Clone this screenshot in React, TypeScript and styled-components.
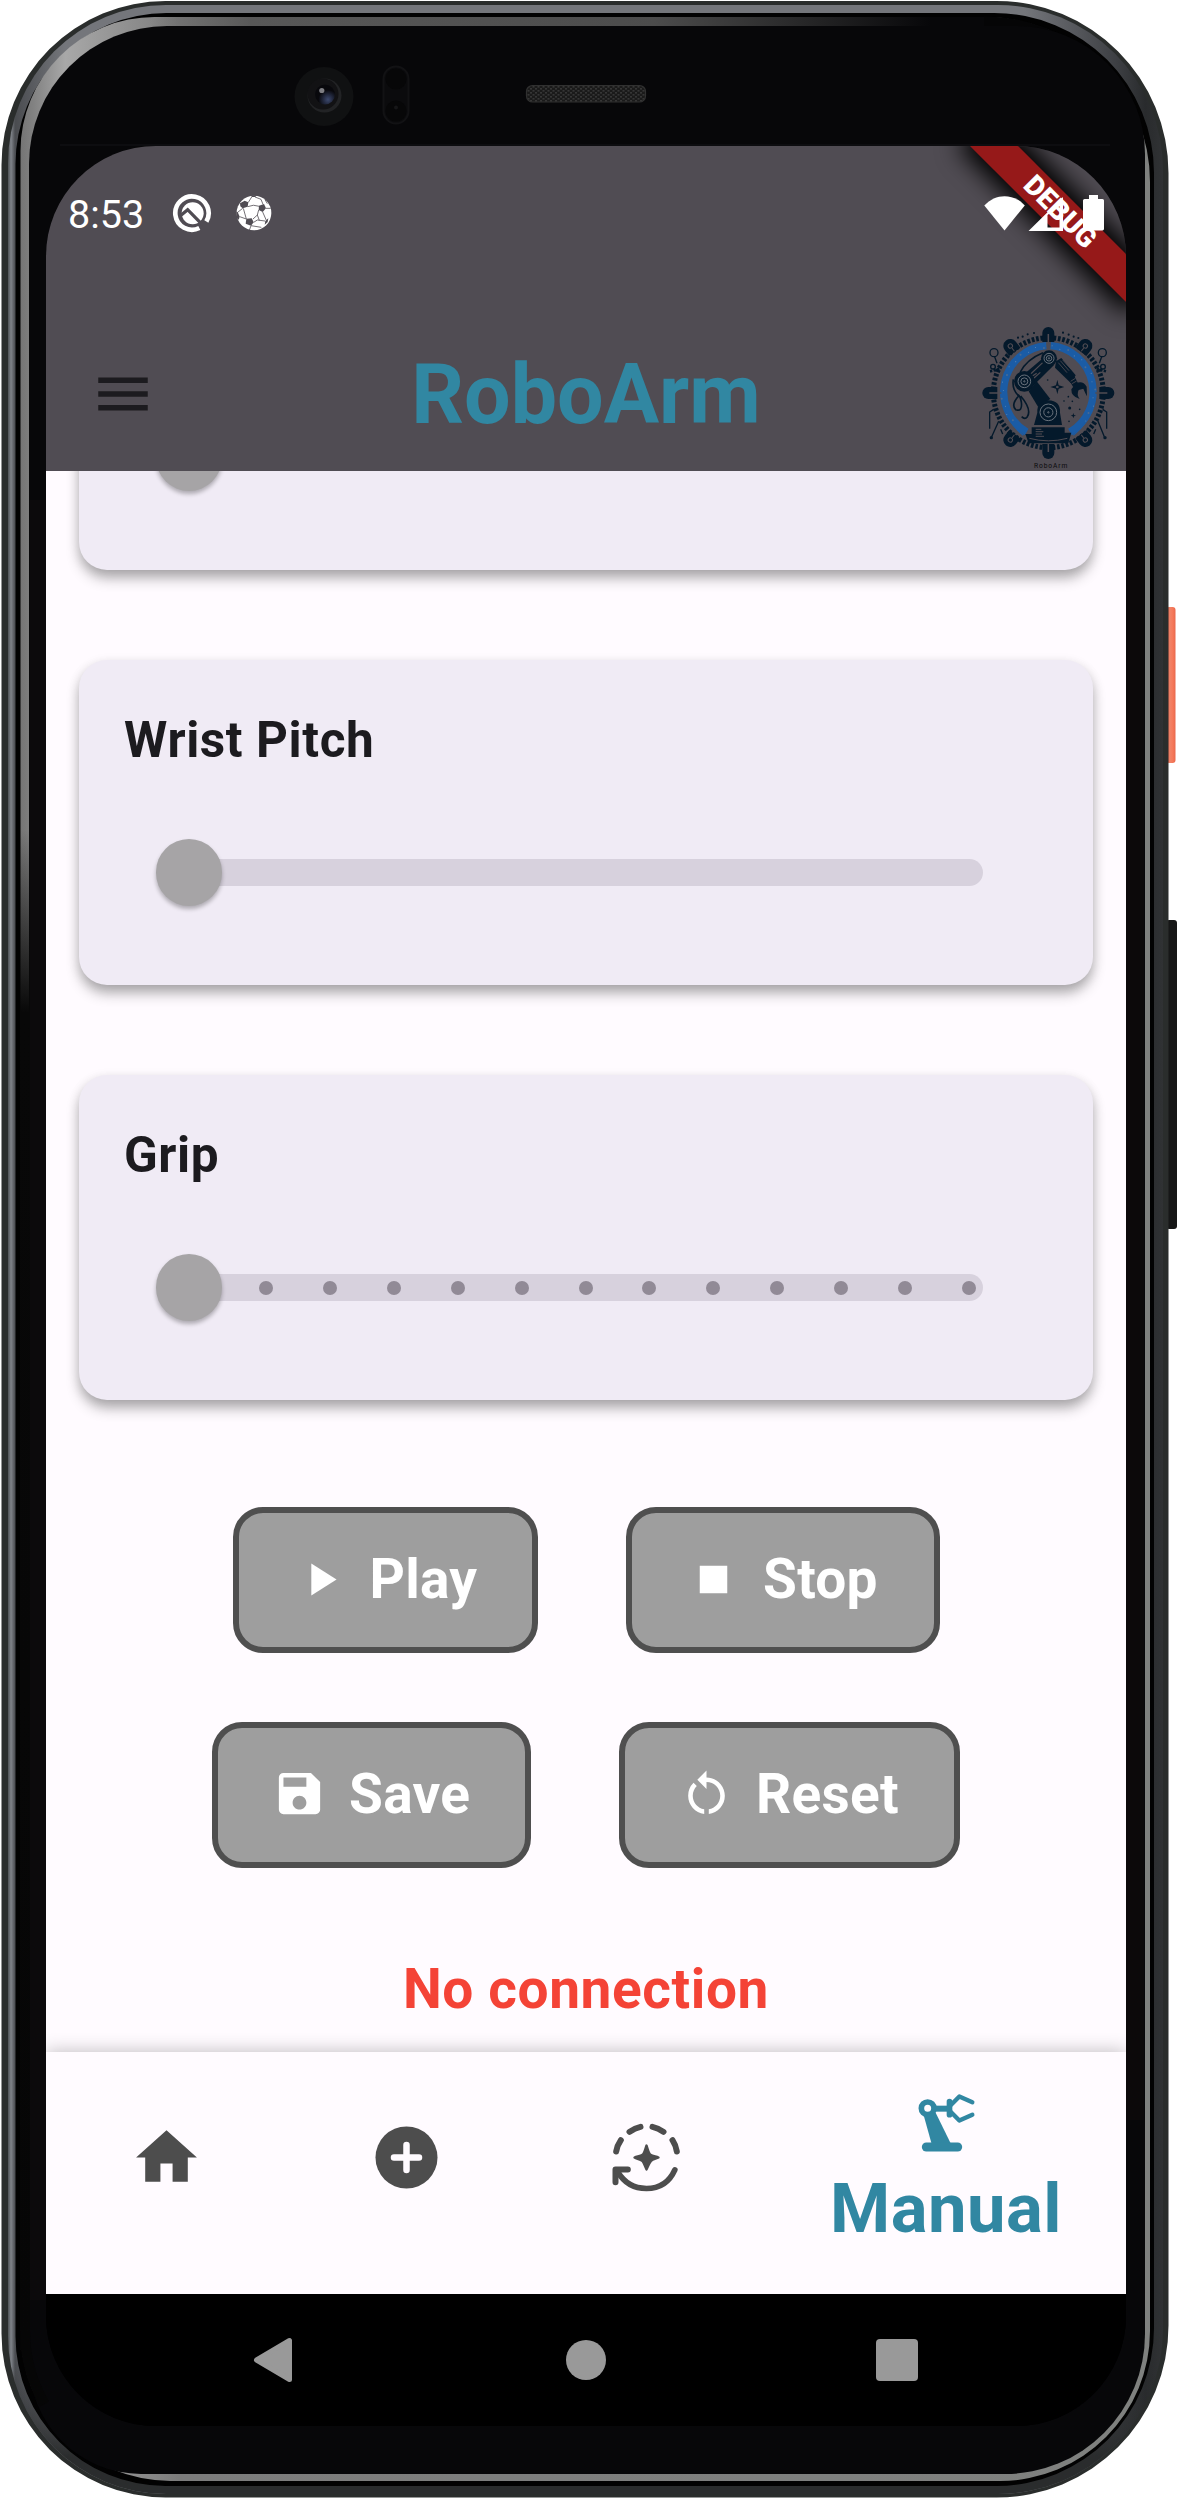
import React from "react";
import styled, { createGlobalStyle } from "styled-components";
import {
  MdPlayArrow,
  MdStop,
  MdSave,
  MdRestartAlt,
  MdMenu,
  MdHome,
} from "react-icons/md";

const INK = "#1c1b1f";
const TEAL = "#3187a2";
const BAR = "#504c53";
const SURFACE = "#fffbff";
const NAV_GREY = "#4d4d4d";

const GlobalStyle = createGlobalStyle`
  * { box-sizing: border-box; }
  body { margin: 0; background: #fff; }
`;

const Device = styled.div`
  position: relative;
  width: 1178px;
  height: 2498px;
  padding: 146px 52px 72px 46px;
  overflow: hidden;
  font-family: Roboto, "Liberation Sans", sans-serif;
`;

const FrameArt = styled.svg`
  position: absolute;
  inset: 0;
  display: block;
`;

const Screen = styled.div`
  position: relative;
  display: flex;
  flex-direction: column;
  width: 1080px;
  height: 2280px;
  border-radius: 110px;
  overflow: hidden;
  background: #000;
`;

const AppBar = styled.header`
  position: relative;
  z-index: 2;
  flex: none;
  height: 325px;
  display: flex;
  flex-direction: column;
  justify-content: space-between;
  background: ${BAR};
`;

const StatusBar = styled.div`
  position: relative;
  z-index: 3;
  height: 134px;
  display: flex;
  align-items: center;
  padding: 0 21px 0 22px;
`;

const Clock = styled.span`
  width: 104px;
  font-size: 39.5px;
  line-height: 46px;
  color: #fff;
  padding-top: 3px;
`;

const StatusIcons = styled.div<{ $gap: number; $end?: boolean }>`
  display: flex;
  align-items: center;
  gap: ${(p) => p.$gap}px;
  margin-left: ${(p) => (p.$end ? "auto" : "0")};
  svg { display: block; }
`;

const Toolbar = styled.div`
  height: 154px;
  display: grid;
  grid-template-columns: 154px 1fr 154px;
  align-items: center;
  justify-items: center;
`;

const MenuButton = styled.button`
  border: 0;
  padding: 0;
  background: none;
  color: ${INK};
  font-size: 66px;
  line-height: 0;
`;

const Title = styled.h1`
  margin: 0;
  font-size: 82.5px;
  line-height: 97px;
  font-weight: 700;
  color: ${TEAL};
  white-space: nowrap;
`;

const LogoSlot = styled.div`
  justify-self: end;
  padding: 8px 9px 0 0;
  svg { display: block; }
`;

const RibbonClip = styled.div`
  position: absolute;
  z-index: 1;
  top: 0;
  right: 0;
  width: 220px;
  height: 220px;
  overflow: hidden;
`;

const Ribbon = styled.div`
  position: absolute;
  left: 44px;
  top: 49px;
  width: 220px;
  height: 34px;
  transform: rotate(45deg);
  background: #961919;
  box-shadow: 0 0 24px 9px #000;
  color: #fff;
  font-size: 28px;
  line-height: 34px;
  font-weight: 900;
  text-align: center;
`;

const Content = styled.main`
  flex: 1;
  min-height: 0;
  overflow: hidden;
  display: flex;
  flex-direction: column;
  padding: 0 33px;
  background: ${SURFACE};
`;

const CardList = styled.div`
  display: flex;
  flex-direction: column;
  gap: 90px;
  margin-top: -226px;
`;

const Card = styled.section`
  height: 325px;
  padding: 51px 77px 0 45px;
  border-radius: 28px;
  background: #f0ebf5;
  box-shadow: 0 9px 14px -1px rgba(0, 0, 0, 0.3), 0 3px 12px rgba(0, 0, 0, 0.1);
`;

const CardTitle = styled.h2`
  margin: 0;
  height: 58px;
  font-size: 49.5px;
  line-height: 58px;
  font-weight: 700;
  letter-spacing: 0.6px;
  color: ${INK};
`;

const SliderRow = styled.div`
  display: flex;
  align-items: center;
  height: 68px;
  margin: 69.5px 33px 0 31.5px;
`;

const Thumb = styled.div`
  position: relative;
  z-index: 1;
  flex: none;
  width: 66.5px;
  height: 66.5px;
  border-radius: 50%;
  background: #a6a4a6;
  box-shadow: 0 3px 4px rgba(0, 0, 0, 0.28);
`;

const Track = styled.div`
  flex: 1;
  display: flex;
  align-items: center;
  justify-content: space-between;
  height: 27.5px;
  margin-left: -47px;
  padding: 0 7px 0 84px;
  border-radius: 14px;
  background: #d7d1dd;
`;

const Tick = styled.i`
  width: 14px;
  height: 14px;
  border-radius: 50%;
  background: #918a96;
`;

const Actions = styled.div`
  display: flex;
  flex-direction: column;
  gap: 68.5px;
  margin-top: 107px;
`;

const ActionRow = styled.div`
  display: flex;
  justify-content: center;
  gap: 88px;
`;

const ActionButton = styled.button<{ $w: number }>`
  width: ${(p) => p.$w}px;
  height: 146px;
  display: flex;
  align-items: center;
  justify-content: flex-start;
  gap: 22px;
  padding: 0 0 2px 54px;
  border: 6px solid #4f4f4f;
  border-radius: 30px;
  background: #9e9e9e;
  color: #fff;
  font-family: inherit;
  font-size: 55px;
  font-weight: 700;
  line-height: 64px;
  letter-spacing: 0.27px;
  white-space: nowrap;
  svg { flex: none; }
`;

const Notice = styled.p`
  margin: 89px 0 0;
  text-align: center;
  font-size: 55px;
  line-height: 64px;
  font-weight: 700;
  letter-spacing: 0.6px;
  color: #f44336;
`;

const TabBar = styled.nav`
  position: relative;
  flex: none;
  height: 242px;
  display: grid;
  grid-template-columns: repeat(3, 240px) 360px;
  background: ${SURFACE};
  box-shadow: 0 -1px 17px rgba(0, 0, 0, 0.24);
`;

const Tab = styled.a<{ $active?: boolean }>`
  display: flex;
  flex-direction: column;
  align-items: center;
  gap: 10px;
  padding-top: ${(p) => (p.$active ? 34 : 69)}px;
  color: ${(p) => (p.$active ? TEAL : NAV_GREY)};
  svg { display: block; }
`;

const TabLabel = styled.span`
  font-size: 68.75px;
  line-height: 80px;
  font-weight: 700;
  letter-spacing: 0.5px;
`;

const SystemNav = styled.div`
  flex: none;
  height: 132px;
  display: grid;
  grid-template-columns: repeat(3, 311px);
  justify-content: center;
  justify-items: center;
  align-items: center;
  background: #000;
  svg { display: block; }
  svg:first-child { margin-right: 5px; }
`;

/** Rounded rectangle path with one radius per corner (tl, tr, br, bl). */
const rr = (x0: number, y0: number, x1: number, y1: number, r: number[]) =>
  `M${x0 + r[0]} ${y0}H${x1 - r[1]}A${r[1]} ${r[1]} 0 0 1 ${x1} ${y0 + r[1]}V${y1 - r[2]}` +
  `A${r[2]} ${r[2]} 0 0 1 ${x1 - r[2]} ${y1}H${x0 + r[3]}A${r[3]} ${r[3]} 0 0 1 ${x0} ${y1 - r[3]}` +
  `V${y0 + r[0]}A${r[0]} ${r[0]} 0 0 1 ${x0 + r[0]} ${y0}Z`;

const PhoneFrame = () => (
  <FrameArt width="1178" height="2498" viewBox="0 0 1178 2498" aria-hidden>
    <defs>
      <linearGradient id="steel" gradientUnits="userSpaceOnUse" x1="7" x2="1163" y1="0" y2="0">
        <stop offset="0" stopColor="#3f4245" />
        <stop offset="0.0035" stopColor="#7f8389" />
        <stop offset="0.007" stopColor="#4a4c50" />
        <stop offset="0.05" stopColor="#74767b" />
        <stop offset="0.88" stopColor="#74767b" />
        <stop offset="0.96" stopColor="#3d3f43" />
        <stop offset="0.985" stopColor="#292b2d" />
        <stop offset="1" stopColor="#303234" />
      </linearGradient>
      <linearGradient id="fadeDown" x1="0" x2="0" y1="0" y2="1">
        <stop offset="0.95" stopColor="#2a2c2d" stopOpacity="0" />
        <stop offset="0.985" stopColor="#2a2c2d" />
      </linearGradient>
      <linearGradient id="glint" gradientUnits="userSpaceOnUse" x1="20" x2="1150" y1="0" y2="0">
        <stop offset="0" stopColor="#747474" />
        <stop offset="0.012" stopColor="#828282" />
        <stop offset="0.04" stopColor="#a8a8a8" />
        <stop offset="0.14" stopColor="#7c7c7c" />
        <stop offset="1" stopColor="#7f817f" />
      </linearGradient>
      <linearGradient id="topGlint" x1="0" x2="1" y1="0" y2="0">
        <stop offset="0" stopColor="#585858" stopOpacity="0" />
        <stop offset="0.12" stopColor="#585858" />
        <stop offset="0.6" stopColor="#4c4c4c" />
        <stop offset="0.93" stopColor="#070709" />
        <stop offset="1" stopColor="#070709" />
      </linearGradient>
      <linearGradient id="key" x1="0" x2="1" y1="0" y2="0">
        <stop offset="0" stopColor="#e2553c" />
        <stop offset="0.4" stopColor="#f08368" />
        <stop offset="0.7" stopColor="#f5795a" />
        <stop offset="1" stopColor="#e9694d" />
      </linearGradient>
      <linearGradient id="leftFade" x1="0" x2="0" y1="0" y2="1">
        <stop offset="0" stopColor="#080808" stopOpacity="0" />
        <stop offset="0.12" stopColor="#080808" />
        <stop offset="1" stopColor="#060606" />
      </linearGradient>
      <pattern id="mesh" width="5" height="4" patternUnits="userSpaceOnUse">
        <rect width="5" height="4" fill="#1a1a1a" />
        <rect x="0" y="0" width="2" height="1.6" fill="#363636" />
        <rect x="2.5" y="2" width="2" height="1.6" fill="#363636" />
      </pattern>
      <radialGradient id="lens" cx="0.65" cy="0.75" r="0.6">
        <stop offset="0" stopColor="#3d4a6e" />
        <stop offset="0.35" stopColor="#252c44" />
        <stop offset="0.8" stopColor="#08080c" />
      </radialGradient>
    </defs>
    <rect x="1166" y="607" width="9.5" height="156" rx="3" fill="url(#key)" />
    <rect x="1166" y="920" width="11" height="309" rx="3" fill="#161717" />
    <path d={rr(1.5, 1, 1168.5, 2497.5, [164, 172, 172, 164])} fill="#2a2d2c" />
    <path d={rr(8, 5, 1163, 2494, [158, 165, 165, 158])} fill="url(#steel)" />
    <path d={rr(8, 5, 1163, 2494, [158, 165, 165, 158])} fill="url(#fadeDown)" />
    <path d={rr(15.5, 13, 1154, 2486, [151, 160, 158, 150])} fill="#020202" />
    <path d={rr(20.5, 17, 1150, 2481, [134, 165, 150, 150])} fill="url(#glint)" />
    <rect x="150" y="17" width="840" height="10" fill="url(#topGlint)" />
    <path d="M984 21.500H985A160.500 160.500 0 0 1 1124 101.700" fill="none" stroke="#050506" strokeWidth="10" />
    <path d={rr(29, 26, 1145, 2474, [138, 128, 140, 112])} fill="#070709" />
    <rect x="20" y="830" width="10" height="1520" fill="url(#leftFade)" />
    <path d="M25 2331A145.500 145.500 0 0 0 44.500 2404" fill="none" stroke="#060606" strokeWidth="10" />
    <rect x="30" y="500" width="16" height="1800" fill="#0c0a0c" />
    <rect x="1126" y="320" width="18" height="1800" fill="#0c090a" />
    <path d="M60 145H1110" stroke="#111113" strokeWidth="1.5" />

    <circle cx="324" cy="96.500" r="29.500" fill="#101112" />
    <circle cx="324.500" cy="95.500" r="17" fill="#222325" />
    <circle cx="323" cy="94" r="15.500" fill="#121214" />
    <circle cx="325" cy="94.500" r="10" fill="url(#lens)" />
    <circle cx="321.800" cy="90.500" r="2.600" fill="#7d7d82" />
    <rect x="383.500" y="66.500" width="25" height="57" rx="12.500" fill="#0b0b0d" stroke="#121214" strokeWidth="2" />
    <circle cx="396" cy="79" r="10.500" fill="#070708" />
    <circle cx="396" cy="111" r="10.500" fill="#070708" />
    <circle cx="396" cy="107.500" r="2" fill="#161618" />
    <rect x="526.500" y="85.500" width="119" height="16.500" rx="6" fill="url(#mesh)" stroke="#303030" strokeWidth="1.200" />
  </FrameArt>
);

const QIcon = () => (
  <svg width="40" height="40" viewBox="337 400 120 120" fill="none">
    <path d="M440 485.500A50 50 0 1 0 419 505" stroke="#fff" strokeWidth="14" />
    <circle cx="399" cy="461" r="33" fill="#fff" />
    <path d="M362 468L384 450L430 497" stroke={BAR} strokeWidth="10" />
  </svg>
);

const BallIcon = () => (
  <svg width="36" height="36" viewBox="526 406 108 108">
    <circle cx="580" cy="460" r="52" fill="#fff" />
    <g fill={BAR}>
      <path d="M538 431L552 423L563 428L561 441L546 446L539 440Z" />
      <path d="M595 438L610 433L616 446L606 457L594 451Z" />
      <path d="M557 477L573 476L579 488L571 498L555 492Z" />
      <path d="M569 407L590 407L583 412L574 412Z" />
      <path d="M614 484L623 476L621 487L612 495Z" />
      <path d="M527 456L531 457L537 471L534 480L529 476Z" />
    </g>
    <path
      d="M563 428L573 412M583 412L601 419L607 434M561 441Q578 433 596 440M546 446L531 458M548 446L557 478M594 451L590 466L577 478M579 488L590 481L613 484M590 466L596 482M606 457L617 482M537 471L557 478M571 498L566 512M571 498L602 503M616 446L630 446M613 420L620 432"
      fill="none"
      stroke={BAR}
      strokeWidth="2.400"
    />
  </svg>
);

const SystemStatus = () => (
  <svg width="121" height="36" viewBox="984 195 121 36" fill="#fff">
    <path d="M984.300 205.500C995.500 193 1013.500 193 1024.800 205.500L1004.500 230.500Z" />
    <path fillRule="evenodd" d="M1028.500 231L1063 197V231ZM1047.500 215V227.500H1059.500V206Z" />
    <path d="M1089 195H1098V199H1102.500A1.600 1.600 0 0 1 1104 200.600V229A1.600 1.600 0 0 1 1102.500 230.500H1084.600A1.600 1.600 0 0 1 1083 229V200.600A1.600 1.600 0 0 1 1084.600 199H1089Z" />
  </svg>
);

const PlusIcon = () => (
  <svg width="73" height="73" viewBox="-36.500 -36.500 73 73">
    <circle r="31" fill="currentColor" />
    <path d="M-12.500 0H12.500M0 -12.500V12.500" stroke={SURFACE} strokeWidth="6.500" strokeLinecap="round" />
  </svg>
);

const AutoIcon = () => (
  <svg width="73" height="73" viewBox="43.500 124.500 219 219" fill="none" stroke="currentColor" strokeLinecap="round" strokeLinejoin="round">
    <path
      d="M62 216Q65 198 76 182M102 157Q117 146 135 142M171 142Q189 146 204 157M231 182Q241 197 244 216"
      strokeWidth="18"
    />
    <path d="M60 308V270H97" strokeWidth="18" />
    <path d="M66 276Q96 327 153 327Q213 327 238 271" strokeWidth="17" />
    <path
      d="M153 198C158 212 160 222 165 226C172 230 182 231 189 234C182 238 172 239 166 245C160 252 158 260 153 270C148 260 146 252 141 245C134 239 124 238 117 234C124 231 134 230 141 226C146 222 148 212 153 198Z"
      fill="currentColor"
      strokeWidth="7"
    />
  </svg>
);

const RobotIcon = () => (
  <svg width="73" height="73" viewBox="944 18 219 219" fill="none" stroke="currentColor" strokeLinecap="round" strokeLinejoin="round">
    <circle cx="997" cy="85" r="19" strokeWidth="17" />
    <path d="M985 106L1021 98L1067 192H1009Z" fill="currentColor" stroke="none" />
    <path d="M993 201H1087" strokeWidth="27" />
    <path d="M1022 86H1060" strokeWidth="18" strokeLinecap="butt" />
    <path d="M1062.500 65V104" strokeWidth="17" />
    <path d="M1066 76L1092 49.500L1131 67M1066 95L1092 121.500L1131 104" strokeWidth="13" />
  </svg>
);

const NAVY = "#04192b";
const BLUE = "#1b5ca5";

const polar = (r: number, deg: number) => {
  const a = (deg * Math.PI) / 180;
  return [327 + r * Math.cos(a), 280 + r * Math.sin(a)];
};

const Logo = () => {
  const dots = Array.from({ length: 26 }, (_, i) => polar(135 + (i % 2) * 6, 142 + i * 10.2));
  return (
    <svg width="137" height="144" viewBox="122 80 411 432" fill="none">
      {/* toothed outer ring, split around the eight lugs */}
      <circle cx="327" cy="280" r="165" stroke={NAVY} strokeWidth="15" strokeDasharray="8 5.200" />
      <path d="M262 398A138 139 0 0 1 321 139M334 139A138 139 0 0 1 392 398" stroke={BLUE} strokeWidth="22" />
      <path d="M192 322Q207 372 252 408M462 322Q447 372 402 408" stroke={BLUE} strokeWidth="4" />
      {dots.map(([x, y], i) => (
        <circle key={i} cx={x} cy={y} r={i % 3 ? 1.6 : 3} fill={i % 3 ? "#5f87b4" : "#4a6a92"} />
      ))}

      {/* cardinal lugs */}
      {[0, 90, 180, 270].map((a) => (
        <g key={a} transform={`rotate(${a} 327 281)`}>
          <path d="M309 128V101A18 18 0 0 1 345 101V128Z" fill={NAVY} />
          <path d="M327 104V140" stroke={BAR} strokeWidth="4.500" />
        </g>
      ))}
      {/* diagonal lugs */}
      {[[213, 140, -38], [438, 140, 38], [213, 422, 218], [438, 422, 142]].map(([x, y, a]) => (
        <g key={`${x}-${y}`} transform={`translate(${x} ${y}) rotate(${a})`}>
          <path d="M-21 22V0A21 21 0 0 1 21 0V22Z" fill={NAVY} />
          <circle r="6.500" stroke={BAR} strokeWidth="3" />
          <path d="M0 8V20" stroke={BAR} strokeWidth="3" />
        </g>
      ))}

      {/* circuit probes around the ring */}
      <g stroke={NAVY} strokeWidth="4">
        <circle cx="164" cy="160" r="12" />
        <circle cx="489" cy="160" r="12" />
        <path d="M166 172L173 192M487 172L480 192" />
        <circle cx="161" cy="202" r="7" />
        <circle cx="491" cy="202" r="7" />
        <path d="M152 216L184 208M500 216L469 208" strokeWidth="8" strokeDasharray="7 4" />
        <path d="M163 330L151 338V388M178 366L157 412M184 390L190 404M490 330L502 338V388M476 366L495 412M469 390L463 404" />
      </g>
      <g fill={NAVY}>
        <circle cx="156" cy="415" r="5" />
        <circle cx="497" cy="415" r="5" />
        {[[236, 115], [250, 112], [265, 105], [284, 101], [371, 100], [388, 106], [403, 112], [417, 116]].map(([x, y], i) => (
          <circle key={i} cx={x} cy={y} r={3.200} />
        ))}
      </g>

      {/* robot arm */}
      <path d="M311 160Q262 180 243 218M222 240Q217 270 238 290Q214 316 229 331Q250 338 246 308Q243 290 236 286M244 290Q278 330 264 352Q257 362 247 352" stroke={NAVY} strokeWidth="5" />
      <path d="M307 180L262 218L283 258L345 196Z" fill={NAVY} />
      <path d="M274 224L310 190M284 236L303 219M276 232L292 222" stroke={BAR} strokeWidth="3.500" />
      <circle cx="329" cy="177" r="24" fill={NAVY} />
      <circle cx="255" cy="246" r="31" fill={NAVY} />
      <path d="M292 246L333 299L296 322L268 276Z" fill={NAVY} />
      <path d="M350 186L366 176L409 228L395 252L347 205Z" fill={NAVY} />
      <path d="M363 184L389 214M357 190L383 220M370 182L396 210" stroke={BAR} strokeWidth="2.500" />
      <path d="M388 240L405 230L416 252L402 264Z" fill={NAVY} />
      <path d="M394 246L408 237M398 253L412 245" stroke={BAR} strokeWidth="2.500" />
      <path d="M410 252Q430 242 442 262L443 291Q437 280 432 268L418 272Q411 286 421 299Q395 292 396 270Z" fill={NAVY} />
      <path d="M294 340Q292 304 327 303Q364 304 362 340L368 377H284Z" fill={NAVY} />
      {[[329, 177, 15], [255, 246, 19], [327, 339, 25]].map(([x, y, r]) => (
        <g key={x + y} stroke="#69727c" strokeWidth="3">
          <circle cx={x} cy={y} r={r} />
          <circle cx={x} cy={y} r={r * 0.55} />
          <circle cx={x} cy={y} r="2" />
        </g>
      ))}
      <path d="M277 384H376V400H396L387 432H268L258 404H277Z" fill={NAVY} />
      <path d="M289 390H306M289 397H312M289 404H308M289 411H314M270 417Q327 432 384 417M286 380H368" stroke={BAR} strokeWidth="3" />

      {/* sparks inside the ring */}
      <path d="M354 241L358 258L375 263L358 268L354 285L350 268L333 263L350 258Z" fill={NAVY} />
      <circle cx="354" cy="263" r="4" fill={BAR} />
      <path d="M402 341L404 347L410 349L404 351L402 357L400 351L394 349L400 347Z" fill={NAVY} />
      {[[325, 242], [391, 326], [387, 292], [374, 305], [421, 330], [389, 366], [399, 306]].map(([x, y], i) => (
        <circle key={i} cx={x} cy={y} r={i === 1 ? 4.500 : 2.500} fill={NAVY} />
      ))}

      <text x="284" y="506" fontSize="20" textLength="100" fill="#0b0b0d" fontFamily="Roboto, sans-serif">
        RoboArm
      </text>
    </svg>
  );
};

function SliderCard({ title, ticks = 0 }: { title?: string; ticks?: number }) {
  return (
    <Card>
      <CardTitle>{title}</CardTitle>
      <SliderRow>
        <Thumb />
        <Track>
          {Array.from({ length: ticks }, (_, i) => (
            <Tick key={i} />
          ))}
        </Track>
      </SliderRow>
    </Card>
  );
}

export default function App() {
  return (
    <>
      <GlobalStyle />
      <Device>
        <PhoneFrame />
        <Screen>
          <AppBar>
            <StatusBar>
              <Clock>8:53</Clock>
              <StatusIcons $gap={24}>
                <QIcon />
                <BallIcon />
              </StatusIcons>
              <StatusIcons $gap={0} $end>
                <SystemStatus />
              </StatusIcons>
            </StatusBar>
            <RibbonClip>
              <Ribbon>DEBUG</Ribbon>
            </RibbonClip>
            <Toolbar>
              <MenuButton aria-label="Menu">
                <MdMenu />
              </MenuButton>
              <Title>RoboArm</Title>
              <LogoSlot>
                <Logo />
              </LogoSlot>
            </Toolbar>
          </AppBar>

          <Content>
            <CardList>
              <SliderCard />
              <SliderCard title="Wrist Pitch" />
              <SliderCard title="Grip" ticks={12} />
            </CardList>
            <Actions>
              <ActionRow>
                <ActionButton $w={305.5}>
                  <MdPlayArrow size={55} />
                  Play
                </ActionButton>
                <ActionButton $w={313.5}>
                  <MdStop size={55} />
                  Stop
                </ActionButton>
              </ActionRow>
              <ActionRow>
                <ActionButton $w={319}>
                  <MdSave size={55} />
                  Save
                </ActionButton>
                <ActionButton $w={341}>
                  <MdRestartAlt size={55} />
                  Reset
                </ActionButton>
              </ActionRow>
            </Actions>
            <Notice>No connection</Notice>
          </Content>

          <TabBar>
            <Tab>
              <MdHome size={73} />
            </Tab>
            <Tab>
              <PlusIcon />
            </Tab>
            <Tab>
              <AutoIcon />
            </Tab>
            <Tab $active>
              <RobotIcon />
              <TabLabel>Manual</TabLabel>
            </Tab>
          </TabBar>

          <SystemNav>
            <svg width="40" height="46" viewBox="0 0 40 46">
              <path d="M3.500 23L36.500 3.500V42.500Z" fill="#999" stroke="#999" strokeWidth="5" strokeLinejoin="round" />
            </svg>
            <svg width="40" height="40" viewBox="0 0 40 40">
              <circle cx="20" cy="20" r="20" fill="#999" />
            </svg>
            <svg width="42" height="42" viewBox="0 0 42 42">
              <rect width="42" height="42" rx="4" fill="#999" />
            </svg>
          </SystemNav>
        </Screen>
      </Device>
    </>
  );
}
